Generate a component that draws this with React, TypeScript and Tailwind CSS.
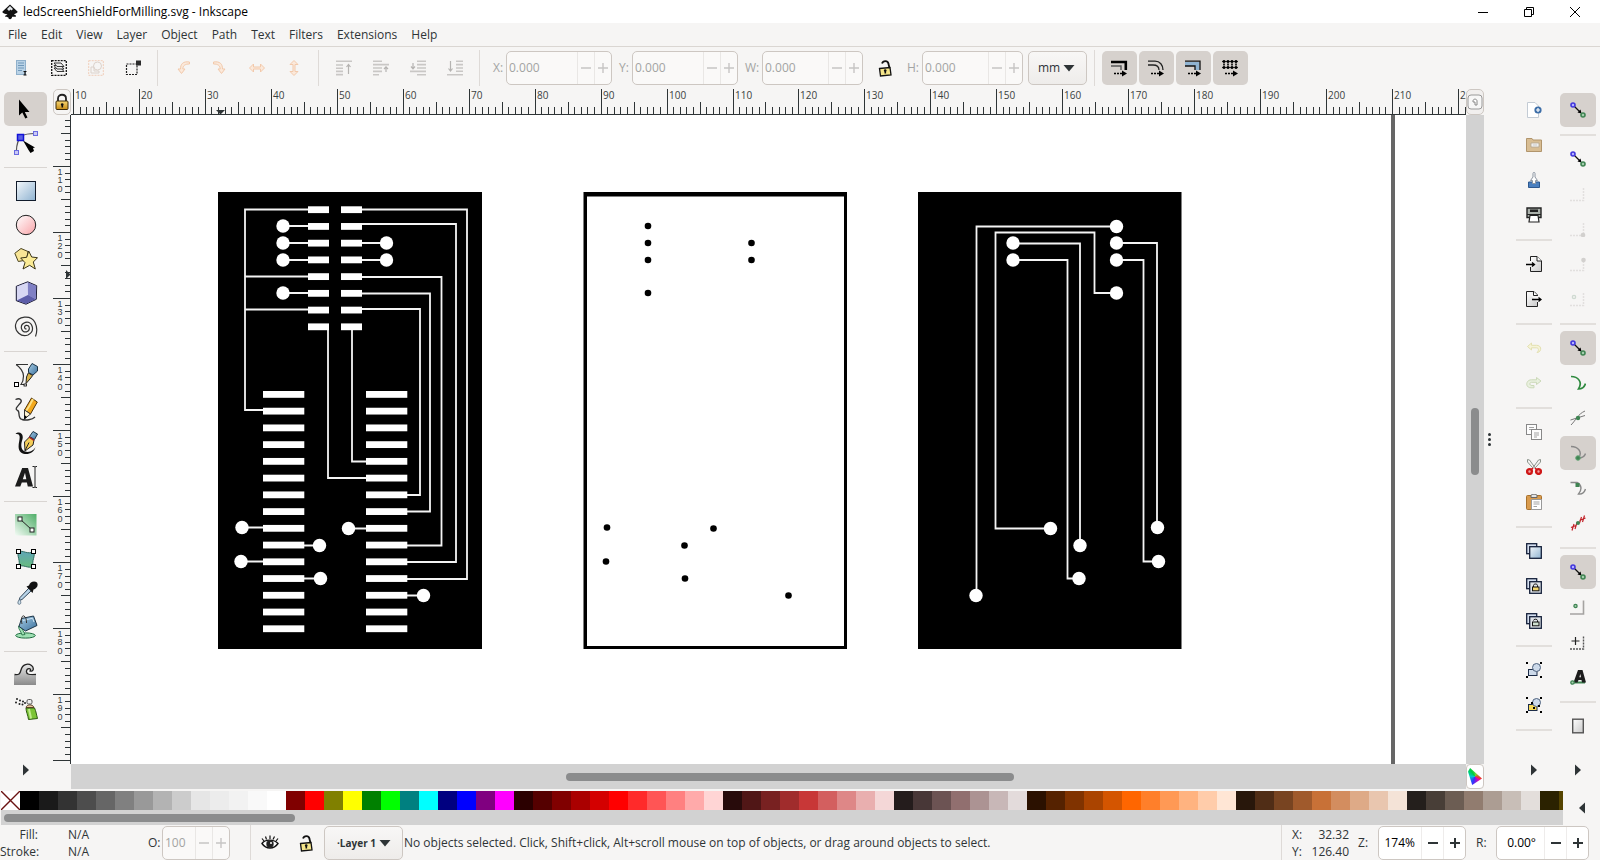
import React, { useState } from 'react';

type IconProps = { children: React.ReactNode; size?: number; className?: string };

const Svg = ({ children, size = 16, className = '' }: IconProps) => (
    <svg width={size} height={size} viewBox={`0 0 ${size} ${size}`} fill="none" className={`shrink-0 ${className}`} aria-hidden="true">
        {children}
    </svg>
);

/* ---------- shared glyphs ---------- */

const Padlock = ({ open = false }: { open?: boolean }) => (
    <Svg size={18}>
        {open ? (
            <>
                <path d="M6 4.5C7 1.5 12 1 12.5 5L13.5 9" stroke="#111" strokeWidth="1.8" />
                <path d="M3.5 9.5L14 8.5L15 16L4.5 17Z" fill="#f5e58a" stroke="#111" strokeWidth="1.3" />
            </>
        ) : (
            <>
                <path d="M5 8V5.5C5 0.5 13 0.5 13 5.5V8" stroke="#222" strokeWidth="1.8" />
                <rect x="3" y="8" width="12" height="8.5" rx="1" fill="url(#gold)" stroke="#3b2a08" />
            </>
        )}
        <path d="M9.3 11V14.5" stroke="#111" strokeWidth="1.6" />
        <circle cx="9.2" cy="11.5" r="1.3" fill="#111" />
    </Svg>
);

const Triangle = ({ dir = 'right' }: { dir?: 'right' | 'left' | 'down' }) => (
    <Svg size={12}>
        {dir === 'right' && <path d="M3 0.5L9 6L3 11.5Z" fill="#2e3436" />}
        {dir === 'left' && <path d="M9 0.5L3 6L9 11.5Z" fill="#2e3436" />}
        {dir === 'down' && <path d="M0.5 3L11.5 3L6 9.5Z" fill="#2e3436" />}
    </Svg>
);

const Gradients = () => (
    <svg width="0" height="0" className="absolute" aria-hidden="true">
        <defs>
            <linearGradient id="gold" x1="0" y1="0" x2="0" y2="1"><stop offset="0" stopColor="#f7d774" /><stop offset="1" stopColor="#c78c17" /></linearGradient>
            <linearGradient id="blue" x1="0" y1="0" x2="1" y2="1"><stop offset="0" stopColor="#f4f8fb" /><stop offset="1" stopColor="#8fb3d1" /></linearGradient>
            <linearGradient id="pink" x1="0" y1="0" x2="1" y2="1"><stop offset="0" stopColor="#fff" /><stop offset="1" stopColor="#f9a3a8" /></linearGradient>
            <linearGradient id="green" x1="0" y1="1" x2="1" y2="0"><stop offset="0" stopColor="#f4fbf5" /><stop offset="1" stopColor="#4fae68" /></linearGradient>
            <linearGradient id="teal" x1="0" y1="0" x2="0" y2="1"><stop offset="0" stopColor="#5fa5b8" /><stop offset="1" stopColor="#68bb7c" /></linearGradient>
            <linearGradient id="grey" x1="0" y1="0" x2="0" y2="1"><stop offset="0" stopColor="#e8e8e8" /><stop offset="1" stopColor="#8a8a8a" /></linearGradient>
            <linearGradient id="steel" x1="0" y1="0" x2="1" y2="1"><stop offset="0" stopColor="#a9cfe6" /><stop offset="1" stopColor="#3a6f9c" /></linearGradient>
            <linearGradient id="sheet" x1="0" y1="0" x2="1" y2="1"><stop offset="0" stopColor="#fff" /><stop offset="1" stopColor="#c9c9c9" /></linearGradient>
        </defs>
    </svg>
);

/* ---------- toolbox (24px) ---------- */

const tools: { name: string; icon: React.ReactNode }[][] = [
    [
        { name: 'Selector', icon: <path d="M5 2.5V18.5L8.3 15.5L11.3 21.5L13.5 20.5L10.8 15H15.5Z" fill="#000" /> },
        {
            name: 'Node', icon: <>
                <path d="M2.3 21C2.5 12 4 8 8 5C11 3 16 2.5 21 2.5" stroke="#555" strokeWidth="1.2" />
                <rect x="0.5" y="19.5" width="4" height="4" fill="#c9c9f5" stroke="#6a6ae0" />
                <rect x="19.5" y="0.5" width="4" height="4" fill="#c9c9f5" stroke="#6a6ae0" />
                <rect x="3.5" y="3.5" width="6" height="6" fill="#5a62e0" stroke="#1212d8" strokeWidth="1.5" />
                <path d="M9 9.5L21 16.5L19 17L20 20L16.5 22L14.5 19Z" fill="#000" />
            </>,
        },
    ],
    [
        { name: 'Rectangle', icon: <rect x="2.5" y="2.5" width="19" height="19" fill="url(#blue)" stroke="#111b2b" /> },
        { name: 'Ellipse', icon: <circle cx="12" cy="12" r="9.7" fill="url(#pink)" stroke="#222" /> },
        {
            name: 'Star', icon: <>
                <path d="M0.8 6.3L7 1.5L14 4.5L12.5 13L4.3 14.5Z" fill="#f8e596" stroke="#4a4320" />
                <path d="M14.7 4L17.7 10L23.5 10.7L19.3 15L21.3 22L15.7 18.3L9 22L11 15.7L6.7 11L12.7 10.3Z" fill="#fbeb95" stroke="#3a3418" />
            </>,
        },
        {
            name: '3D box', icon: <>
                <path d="M13.7 0.8L22.7 4.7L22.3 18.3L12 23.2L2.3 19.7V5.3Z" fill="#a5a5dd" stroke="#1c1c33" />
                <path d="M13.7 1.5L3 5.5V19.3L14 14Z" fill="#d7d7f3" />
                <path d="M14 1.5L22.2 5L21.8 18L14 14Z" fill="#8080c4" />
                <path d="M14 14L21.8 18.2L12 22.7L3 19.4Z" fill="#5d5da9" />
            </>,
        },
        { name: 'Spiral', icon: <path d="M12.5 13.8C10.5 14.6 9.6 11.2 12 10.4C15.5 9.4 17 15.5 12.5 16.8C7 18 4.8 9.6 11.5 7.4C18 5.6 22 16 14 20C7 22.8 0.5 16 1.6 9.5C3.5 0.5 17 -0.5 21 7.5C23.5 12.5 23 17.5 21.5 21.5" stroke="#333" strokeWidth="1.2" /> },
    ],
    [
        {
            name: 'Pen', icon: <>
                <path d="M2 1.5H14M2 1.5C6 4 9.5 9 9.5 13C9.5 17 8.5 19.5 7 21.5H11" stroke="#333" strokeWidth="1.2" />
                <rect x="0.5" y="19.5" width="4" height="4" fill="#fff" stroke="#000" />
                <rect x="10" y="21" width="2.5" height="2" fill="#fff" stroke="#000" strokeWidth="0.8" />
                <path d="M18 0.5L23.5 3.5V8L19 12L14.5 9.5V6Z" fill="url(#steel)" stroke="#1b3345" />
                <path d="M14.3 10L18.7 12.5L16 16L12 20.5L12.5 14Z" fill="#d9b44a" stroke="#222" />
            </>,
        },
        {
            name: 'Pencil', icon: <>
                <path d="M1.5 2.5C6 0.5 9 3 6 6.5C3 10 0.5 12 3.5 13.5C6.5 14 3 21 8 22.5C12 23.5 18 23 21 20" stroke="#333" strokeWidth="1.3" />
                <path d="M17.5 1L23.3 5L16.5 17L10.5 13Z" fill="#f3a81c" stroke="#50340a" />
                <path d="M19 2L15 9.5L12 14" stroke="#fbe28a" strokeWidth="1.8" />
                <path d="M10.5 13L16.5 17L10.5 22Z" fill="#fff2d0" stroke="#333" />
                <path d="M10.5 18L13 20L10.3 22.3Z" fill="#000" />
            </>,
        },
        {
            name: 'Calligraphy', icon: <>
                <path d="M1.5 3C4.5 0 10 2 8.5 8C7 13 6 18 11 20.5C16 22 20 19 21.5 16C20 22.5 12 25 7 21.5C2 17 6.5 9 5.5 5C5 3 3.5 3 1.5 3Z" fill="#111" />
                <path d="M19 0.5L23.5 3L20.5 8.5L15.5 5.5Z" fill="url(#steel)" stroke="#1b3345" />
                <path d="M20 9L15.5 6L10.5 11L11 20L19 14Z" fill="#f4cd58" stroke="#222" />
                <path d="M11.3 19L15 11.5" stroke="#222" />
                <path d="M15 6L20 9.5" stroke="#b02020" strokeWidth="1.5" />
            </>,
        },
        {
            name: 'Text', icon: <>
                <path fillRule="evenodd" d="M1 21.5L8.2 3H14L19 21.5H13.8L12.9 17.5H7.8L6.3 21.5ZM8.8 14.3H12.3L11 7.8Z" fill="#1c1c1c" />
                <path d="M18.5 1.5H20.5L21 2.5L21.5 1.5H23M21 2.5V21.5M18.5 22.5H20.5L21 21.5L21.5 22.5H23" stroke="#222" />
            </>,
        },
    ],
    [
        {
            name: 'Gradient', icon: <>
                <rect x="1" y="1" width="21.5" height="21.5" fill="url(#green)" />
                <path d="M6 6L18 17" stroke="#222" />
                <rect x="4" y="4" width="4" height="4" fill="#fff" stroke="#222" />
                <rect x="16" y="15" width="4" height="4" fill="#fff" stroke="#222" />
            </>,
        },
        {
            name: 'Mesh', icon: <>
                <path d="M4.5 4.5C9 3 14 8 19.5 4.5C22 9 17 14 19.5 19.5C14 22 9 17 4.5 19.5C7 14 2.5 9 4.5 4.5Z" fill="url(#teal)" stroke="#2f6b60" />
                {[[2.5, 2.5], [17.5, 2.5], [2.5, 17.5], [17.5, 17.5]].map(([x, y]) => (
                    <rect key={`${x}-${y}`} x={x} y={y} width="4" height="4" fill="#fff" stroke="#000" />
                ))}
            </>,
        },
        {
            name: 'Dropper', icon: <>
                <path d="M15 7L17.5 9.5L8 18.5L5 19.5L6 16.5Z" fill="#b9d4e8" stroke="#2f4356" />
                <path d="M12.5 5.5L15 4.5C16 1 20 -0.5 23 1.5C25 5 22 8 19.5 8.5L18.5 12Z" fill="#111" />
                <path d="M5.5 18.5C7.5 21 7 23.3 5.3 23.3C3.3 23.3 3.5 20.5 5.5 18.5Z" fill="#cfe2ee" stroke="#4d6377" strokeWidth="0.8" />
            </>,
        },
        {
            name: 'Bucket', icon: <>
                <ellipse cx="11.5" cy="20.5" rx="9.8" ry="2.6" fill="#9ee0b3" stroke="#1e6b3e" />
                <path d="M4.5 11C4.5 15 7 16 8 20L11 19.5C10 17 8 14 7.5 12Z" fill="#9ee0b3" stroke="#1e6b3e" strokeWidth="0.8" />
                <path d="M7.5 3.5L19.5 1L23 10.5L11.5 16L5 11.5Z" fill="url(#steel)" stroke="#1d3447" />
                <path d="M9 5.5L18.5 3.2L20 7" stroke="#cfe5f3" />
                <path d="M8 9C6.5 3 8.5 0 10 1C12 2 12.5 5 12.5 8" stroke="#333" />
            </>,
        },
    ],
    [
        {
            name: 'Tweak', icon: <>
                <path d="M0 12C5 12 6 11 7 7C8.5 1 14 0 17.5 2.5C20.5 5 19.5 9 16 8C18 5 13 4.5 12.5 8C12 11.5 14.5 12.5 22 12.5V22H0Z" fill="url(#grey)" />
                <path d="M0.5 11.5C5 12 6 11 7 7C8.5 1 14 0 17.5 2.5C20.5 5 19.5 9 16 8C18 5 13 4.5 12.5 8C12 11.5 15.5 12 22 11.5" stroke="#222" strokeWidth="1.3" />
            </>,
        },
        {
            name: 'Spray', icon: <>
                {[[3, 2], [2, 5.5], [6, 3.5], [5.5, 7], [9, 4.5], [8.5, 7.5], [11, 6]].map(([x, y]) => (
                    <circle key={`${x}-${y}`} cx={x} cy={y} r="1" fill="#222" />
                ))}
                <path d="M12 11H20.5C22 14 22.5 18 23.5 21.5L14.5 22.5C14 18 12 15 12 11Z" fill="#7cc436" stroke="#2d5b11" />
                <path d="M15 12C15.5 15 16.5 18 17 21.5" stroke="#c0ea8c" strokeWidth="2" />
                <path d="M12 10.5C12.5 7.5 18.5 6.5 20 10.5Z" fill="#e9c9a0" stroke="#5a4126" />
                <rect x="13" y="2.5" width="5" height="4.5" rx="1.5" fill="#eee" stroke="#555" />
            </>,
        },
    ],
];

/* ---------- commands bar ---------- */

const pageWithArrow = (inward: boolean) => (
    <>
        <path d={inward ? 'M4.5 5V0.5H11L15.5 5V15.5H4.5V11' : 'M0.5 0.5H8L11.5 4V5M0.5 0.5V15.5H11.5V11'} fill="url(#sheet)" stroke="#222" />
        <path d={inward ? 'M11 0.5V5H15.5' : 'M7.5 0.5V4.5H11.5'} fill="#fff" stroke="#222" />
        <path d={inward ? 'M0 8.5H8M6 6.5L8.5 8.5L6 10.5' : 'M6 8.5H14M12.5 6.5L15 8.5L12.5 10.5'} stroke="#000" strokeWidth="1.3" />
    </>
);

const duplicate = (lock?: 'closed' | 'open') => (
    <>
        <rect x="0.7" y="0.7" width="10" height="10" fill="#d4dff0" stroke="#14203a" strokeWidth="1.3" />
        <rect x="3.7" y="3.7" width="11.6" height="11.6" fill={lock ? '#dfe3e8' : 'url(#blue)'} stroke="#14203a" strokeWidth="1.3" />
        {lock && (
            <>
                <path d={lock === 'closed' ? 'M7.5 9V7.5C7.5 5.5 11.5 5.5 11.5 7.5V9' : 'M7.5 7.5C7.5 5.8 11.5 5.8 11.5 7.5V9.5'} stroke="#111" />
                <rect x="6.5" y="9" width="6.5" height="3.8" fill={lock === 'closed' ? '#f4d76f' : '#cfe0d0'} stroke="#111" />
            </>
        )}
    </>
);

const groupShapes = (fill: string) => (
    <>
        <rect x="2.5" y="7.5" width="8.5" height="6" fill={fill} stroke="#1c2c48" />
        <circle cx="10.5" cy="5.5" r="4" fill="#cddaea" stroke="#4d617d" />
        <path d="M0 0H2V2H0ZM14 0H16V2H14ZM0 14H2V16H0ZM14 14H16V16H14Z" fill="#000" />
    </>
);

const commands: { name: string; icon: React.ReactNode }[][] = [
    [
        {
            name: 'New', icon: <>
                <path d="M1.5 0.5H9L12.5 4V15.5H1.5Z" fill="#fff" stroke="#c3cbd4" />
                <circle cx="12" cy="8" r="3.6" fill="#3d6ea8" />
                <path d="M12 6V10M10 8H14" stroke="#fff" strokeWidth="1.2" />
            </>,
        },
        {
            name: 'Open', icon: <>
                <path d="M0.5 1.5H6L7 3H15.5V14.5H0.5Z" fill="#d8bd93" stroke="#b1956c" />
                <path d="M5 6H13V10H5Z" fill="#fff" stroke="#b7aa95" />
                <path d="M6.5 8H11.5" stroke="#bbb" />
            </>,
        },
        {
            name: 'Save', icon: <>
                <path d="M2.5 10H13.5V15.5H2.5Z" fill="#4a7fbf" stroke="#2d588f" />
                <path d="M6.5 11.5V8.5H4.5L7 5V1.5C7 0 9 0 9 1.5V5L11.5 8.5H9.5V11.5Z" fill="#fff" stroke="#8b94a0" />
            </>,
        },
        {
            name: 'Print', icon: <>
                <path d="M1 1H15V10.5H1Z" fill="#a9b0aa" stroke="#222" strokeWidth="1.4" />
                <path d="M4 2.5H12V5H4Z" fill="#222" />
                <path d="M1 7.5H15" stroke="#222" />
                <path d="M4 8.5H12L13 15H3Z" fill="#fff" stroke="#222" strokeWidth="1.2" />
            </>,
        },
    ],
    [
        { name: 'Import', icon: pageWithArrow(true) },
        { name: 'Export', icon: pageWithArrow(false) },
    ],
    [
        { name: 'Undo', icon: <path d="M5.5 3L1.5 6.5L5.5 10V7.8H10.5C13 7.8 13 11 11 12.5C15.5 12.5 16.5 5.3 10.5 5.3H5.5Z" fill="#f6f4d8" stroke="#e3e0b0" /> },
        { name: 'Redo', icon: <path d="M10.5 2.5L15 6L10.5 9.5V7.3H5.5C3.5 7.3 3 10.5 6 10.5H8V12.8H5C-1 12.8 -0.5 4.8 5.5 4.8H10.5Z" fill="#e9f0df" stroke="#cbd9b8" /> },
    ],
    [
        {
            name: 'Copy', icon: <>
                <rect x="0.5" y="0.5" width="10" height="10" fill="#fdfdfd" stroke="#888" />
                <rect x="5.5" y="5.5" width="10" height="10" fill="#fdfdfd" stroke="#888" />
                <path d="M3 3.5H8M3 5.5H5M8 9H13M8 11H13M8 13H11" stroke="#999" strokeWidth="0.9" />
            </>,
        },
        {
            name: 'Cut', icon: <>
                <path d="M1.5 0.5L3.5 1L10 10M14.5 0.5L12.5 1L6 10M1.5 0.5V3L6.5 8.5M14.5 0.5V3L9.5 8.5" stroke="#8b938b" />
                <circle cx="3.5" cy="12.5" r="2.4" fill="#f3a0a0" stroke="#cf1717" strokeWidth="2.4" />
                <circle cx="12.5" cy="12.5" r="2.4" fill="#f3a0a0" stroke="#cf1717" strokeWidth="2.4" />
                <path d="M5.5 10.5L7 9M10.5 10.5L9 9" stroke="#cf1717" strokeWidth="1.6" />
            </>,
        },
        {
            name: 'Paste', icon: <>
                <rect x="0.5" y="1.5" width="15" height="14" rx="1" fill="#d99b4d" stroke="#a8712c" />
                <path d="M5 1.5C5 -0.3 11 -0.3 11 1.5V3.5H5Z" fill="#e4e4e4" stroke="#666" />
                <path d="M5.5 5.5H15.5V15.5H5.5Z" fill="#fff" stroke="#999" />
                <path d="M7.5 8H13.5M7.5 10H13.5M7.5 12.5H11" stroke="#999" strokeWidth="0.9" />
            </>,
        },
    ],
    [
        { name: 'Duplicate', icon: duplicate() },
        { name: 'Clone', icon: duplicate('closed') },
        { name: 'Unlink clone', icon: duplicate('open') },
    ],
    [
        { name: 'Group', icon: groupShapes('#cddaea') },
        { name: 'Ungroup', icon: <>{groupShapes('#f7da57')}<path d="M5 5H7V7H5ZM12 8H14V10H12ZM7 10H9V12H7Z" fill="#000" /></> },
    ],
];

/* ---------- snap bar ---------- */

const snapDots = (
    <>
        <path d="M4.5 4.5L10 10" stroke="#111" strokeWidth="1.2" />
        <path d="M11.5 11.5L7.5 10.5L10.5 7.5Z" fill="#000" />
        <circle cx="3" cy="3" r="2" fill="#b4b4ff" stroke="#4338dd" strokeWidth="1.6" />
        <circle cx="13" cy="13" r="2" fill="#a5cdae" stroke="#3f8452" strokeWidth="1.6" />
    </>
);

const corner = (extra?: React.ReactNode) => (
    <>
        <path d="M0 14.5H13.5V1" stroke="#e2e0de" strokeWidth="1.5" strokeDasharray="2 1" />
        {extra}
    </>
);

const snaps: { name: string; icon: React.ReactNode; on?: boolean }[][] = [
    [{ name: 'Enable snapping', icon: snapDots, on: true }],
    [
        { name: 'Snap bounding boxes', icon: snapDots },
        { name: 'Snap to bbox edges', icon: corner() },
        { name: 'Snap to bbox corners', icon: corner(<circle cx="13" cy="14" r="2.3" fill="#d2d0ce" />) },
        { name: 'Snap edge midpoints', icon: corner(<circle cx="13.5" cy="4" r="2.3" fill="#d2d0ce" />) },
        { name: 'Snap bbox centers', icon: corner(<circle cx="4" cy="6" r="1.6" stroke="#cfdad1" strokeWidth="1.4" />) },
    ],
    [
        { name: 'Snap nodes', icon: snapDots, on: true },
        { name: 'Snap to paths', icon: <path d="M1 1.5C8 1.5 13 7 8.5 14C12 14 14.5 12 15.5 8.5" stroke="#2f8a3f" strokeWidth="1.7" /> },
        { name: 'Snap to intersections', icon: <><path d="M1 15C6 10 8 4 15 1M0.5 10L15 5.5" stroke="#777" /><circle cx="8" cy="8" r="2.2" fill="#3f8452" /></> },
        { name: 'Snap to cusp nodes', icon: <><path d="M1 1.5C8 1.5 13 7 8.5 13C12 13 14.5 12 15.5 8.5" stroke="#888" strokeWidth="1.4" /><circle cx="8" cy="13" r="2.3" fill="#3f8452" stroke="#68a577" /></>, on: true },
        { name: 'Snap to smooth nodes', icon: <><path d="M0.5 2.5H7C12 5 12 10 8.5 14C12 14.5 14.5 12 15.5 9" stroke="#888" strokeWidth="1.4" /><rect x="5.5" y="3" width="4" height="4" fill="#3f8452" /></> },
        { name: 'Snap to midpoints', icon: <><path d="M2 15.5L4 9M5 14L7 7.5M1 12.5L6 10.5M9.5 8L11.5 2M12.5 7L14.5 0.5M9.5 5.5L15.5 3" stroke="#c22127" strokeWidth="1.2" /><circle cx="8" cy="8" r="2" fill="#3f8452" /></> },
    ],
    [
        { name: 'Snap other points', icon: snapDots, on: true },
        { name: 'Snap object midpoints', icon: <><path d="M0 15H13.5V1.5" stroke="#a5a3a1" strokeWidth="1.6" /><circle cx="5.5" cy="7" r="1.6" fill="#a5cdae" stroke="#3f8452" strokeWidth="1.3" /></> },
        { name: 'Snap rotation centers', icon: <><path d="M0 15H13.5V1.5" stroke="#555" strokeWidth="1.4" strokeDasharray="2 1" /><path d="M5.5 3V11M1.5 7H9.5" stroke="#222" strokeWidth="1.2" /></> },
        { name: 'Snap text baselines', icon: <><path d="M2 13.5H15" stroke="#3f8452" strokeWidth="2" /><path fillRule="evenodd" d="M3.5 13.5L8 1H12.5L16 13.5H12L11.5 11H8.5L7.5 13.5ZM9.3 8.3H11L10.3 5Z" fill="#1c1c1c" /><circle cx="2.5" cy="13.5" r="1.7" fill="#a5cdae" stroke="#3f8452" strokeWidth="1.3" /></> },
    ],
    [
        { name: 'Snap to page border', icon: <rect x="2.7" y="1.2" width="10.6" height="13.6" fill="url(#sheet)" stroke="#555" strokeWidth="1.4" /> },
    ],
];

/* ---------- tool controls ---------- */

const Bars = ({ lines, arrow }: { lines: string; arrow: string }) => (
    <>
        <path d={lines} stroke="#c9c7c5" strokeWidth="1.6" />
        <path d={arrow} stroke="#b5b3b1" strokeWidth="1.2" />
    </>
);

const controls: { name: string; icon: React.ReactNode }[][] = [
    [
        {
            name: 'Select all', icon: <>
                <rect x="2.5" y="0.5" width="9" height="14" fill="#b9d2e6" stroke="#8fb0cb" />
                <path d="M4 3H10M4 5.5H10M4 8H10M4 10.5H8" stroke="#6f98ba" />
                <path d="M9.5 11.5H12.5M11 11.5V15M9.5 15H12.5" stroke="#111" strokeWidth="1.2" />
            </>,
        },
        {
            name: 'Select in all layers', icon: <>
                <rect x="0.7" y="0.7" width="14.6" height="14.6" stroke="#111" strokeWidth="1.3" strokeDasharray="2 1" />
                {[9, 6.5, 4].map(y => <path key={y} d={`M3 ${y - 1}H10L13 ${y + 2.5}H6Z`} fill="#eee" stroke="#222" strokeWidth="0.9" />)}
            </>,
        },
        {
            name: 'Deselect', icon: <>
                <rect x="0.7" y="0.7" width="14.6" height="14.6" stroke="#f0cdb9" strokeDasharray="2 1" />
                <circle cx="9.5" cy="6" r="4" stroke="#dcd2cb" />
                <path d="M3 7H6V11H11V13H3Z" stroke="#dcd2cb" />
            </>,
        },
        {
            name: 'Rubber band touch', icon: <>
                <rect x="1.5" y="4" width="10.5" height="10.5" stroke="#222" strokeWidth="1.2" strokeDasharray="2 1" />
                <rect x="11" y="0.5" width="5" height="5" fill="#2b2b2b" />
            </>,
        },
    ],
    [
        { name: 'Rotate 90 left', icon: <path d="M14.5 2C8 1 5.5 4 5.5 9H3L6.5 13.5L10 9H7.8C8 5.5 10 4 14.5 4Z" fill="#fbe9db" stroke="#f2c9ab" /> },
        { name: 'Rotate 90 right', icon: <path d="M1.5 2C8 1 10.5 4 10.5 9H13L9.5 13.5L6 9H8.2C8 5.5 6 4 1.5 4Z" fill="#fbe9db" stroke="#f2c9ab" /> },
        { name: 'Flip horizontal', icon: <path d="M0.5 8L4.5 4V7H11.5V4L15.5 8L11.5 12V9H4.5V12Z" fill="#fbe9db" stroke="#f2c9ab" /> },
        { name: 'Flip vertical', icon: <path d="M8 0.5L12 4.5H9V11.5H12L8 15.5L4 11.5H7V4.5H4Z" fill="#fbe9db" stroke="#f2c9ab" /> },
    ],
    [
        { name: 'Raise to top', icon: <Bars lines="M0 1.2H16M0 5H7M0 8.2H7M0 11.4H7M0 14.6H7" arrow="M12.5 14V4.5M10.5 7L12.5 4.5L14.5 7" /> },
        { name: 'Raise', icon: <Bars lines="M0 1.2H9M0 4.6H16M0 8H9M0 11.4H9M0 14.8H6" arrow="M13 12V7M11 9L13 6.8L15 9" /> },
        { name: 'Lower', icon: <Bars lines="M7 1.2H16M7 4.6H16M7 8H16M0 11.4H16M7 14.8H16" arrow="M3 3V8.5M1 6.5L3 8.8L5 6.5" /> },
        { name: 'Lower to bottom', icon: <Bars lines="M9 1.2H16M9 4.6H16M9 8H16M9 11.2H16M0 14.8H16" arrow="M3.5 1V11M1.5 8.5L3.5 11L5.5 8.5" /> },
    ],
];

const affects: { name: string; icon: React.ReactNode }[] = [
    { name: 'Scale stroke width', icon: <><path d="M0 2H14.8V10" stroke="#000" strokeWidth="2.6" /><path d="M0 6H10V10" stroke="#555" strokeWidth="1.4" /></> },
    { name: 'Scale rounded corners', icon: <><path d="M0 1.2H7C12 1.2 15 5 15 10" stroke="#222" strokeWidth="1.3" /><path d="M0 5H5C9 5 11 7 11 10" stroke="#222" strokeWidth="1.3" /></> },
    { name: 'Move gradients', icon: <><path d="M0 2H14.5V10H10V6H0Z" fill="#8fb3d1" /><path d="M0 1.2H15V10M0 6H10V10" stroke="#111" strokeWidth="1.3" /></> },
    {
        name: 'Move patterns', icon: <>
            <path d="M0 1.5H16M0 7.5H16" stroke="#111" strokeWidth="0.8" />
            {[2, 6, 10, 14].map(x => <path key={x} d={`M${x - 1.5} 1.5H${x + 1.5}M${x} 0V3M${x - 1.5} 7.5H${x + 1.5}M${x} 6V9M${x} 3.5V5.5`} stroke="#000" strokeWidth="1.6" />)}
        </>,
    },
];

const AffectArrow = () => <><path d="M3 13.5H11" stroke="#000" strokeWidth="1.4" strokeDasharray="2 1" /><path d="M11 10.5L16 13.5L11 16.5Z" fill="#000" /></>;

/* ---------- small building blocks ---------- */

interface SpinProps {
    label: string;
    value: string;
    className: string;
    labelClass: string;
    buttonClass?: string;
    inputClass?: string;
    disabled?: boolean;
}

const Spin = ({ label, value, className, labelClass, buttonClass = 'w-[17px]', inputClass = 'pl-[2px]', disabled }: SpinProps) => {
    const tone = disabled ? 'text-[#a3a4a3]' : 'text-[#2e3436]';
    const divider = disabled ? 'border-[#e9e7e5]' : 'border-[#eeeceb]';
    return (
        <div className={`flex items-center ${tone}`}>
            <label htmlFor={`spin-${label}`} className={`shrink-0 ${labelClass}`}>{label}:</label>
            <div className={`flex h-[34px] shrink-0 overflow-hidden rounded-[5px] border border-[#cdc7c2] ${disabled ? 'bg-[#faf9f8]' : 'bg-white'} ${className}`}>
                <input id={`spin-${label}`} defaultValue={value} disabled={disabled} className={`min-w-0 flex-1 bg-transparent outline-none ${inputClass}`} />
                {['M1 6H11', 'M1 6H11M6 1V11'].map((d, i) => (
                    <button key={d} type="button" disabled={disabled} aria-label={`${i ? 'Increase' : 'Decrease'} ${label}`} className={`flex shrink-0 items-center justify-center border-l ${divider} ${buttonClass}`}>
                        <Svg size={12}><path d={d} stroke={disabled ? '#c6c5c4' : '#2e3436'} strokeWidth={disabled ? 1.4 : 2} /></Svg>
                    </button>
                ))}
            </div>
        </div>
    );
};

const Drop = ({ label, options, className }: { label: string; options: string[]; className: string }) => (
    <div className="relative shrink-0">
        <select aria-label={label} className={`h-[34px] appearance-none rounded-[5px] border border-[#cdc7c2] bg-linear-to-b from-[#f8f7f6] to-[#eeecea] outline-none ${className}`}>
            {options.map(o => <option key={o}>{o}</option>)}
        </select>
        <span className="pointer-events-none absolute inset-y-0 right-3 flex items-center"><Triangle dir="down" /></span>
    </div>
);

const VSep = ({ className = '' }: { className?: string }) => <div className={`w-px shrink-0 self-stretch bg-[#dedad7] ${className}`} />;

/* ---------- rulers ---------- */

const MM = 6.595;
const digitBaselines = [9, 17, 26];

const TopRuler = () => (
    <svg className="h-[26px] w-full min-w-0" aria-hidden="true">
        {Array.from({ length: 300 }, (_, i) => {
            const x = Math.round(2 + i * MM) + 0.5;
            const top = i % 10 === 0 ? 0 : i % 5 === 0 ? 13 : 18;
            return <path key={i} d={`M${x} ${top}V25`} stroke="#2e3436" />;
        })}
        {Array.from({ length: 22 }, (_, i) => (
            <text key={i} x={Math.round(2 + i * 10 * MM) + 2} y="10" fill="#3a3f41" className="text-[10px]">{10 + i * 10}</text>
        ))}
        <path d="M145 21H154L149.5 25.5Z" fill="#2e3436" />
        <path d="M0 25.5H4000" stroke="#2e3436" />
    </svg>
);

const SideRuler = () => (
    <svg className="h-full w-[18px]" aria-hidden="true">
        {Array.from({ length: 200 }, (_, i) => {
            const mm = i - 7;
            const y = Math.round(51 + mm * 6.605) + 0.5;
            const left = mm % 10 === 0 ? 0 : mm % 5 === 0 ? 8 : 12;
            return <path key={i} d={`M${left} ${y}H18`} stroke="#2e3436" />;
        })}
        {Array.from({ length: 9 }, (_, i) => String(110 + i * 10).split('').map((digit, n) => (
            <text key={`${i}-${n}`} x="7" y={Math.round(51 + i * 66.05) + digitBaselines[n]} textAnchor="middle" fill="#3a3f41" className="font-['Liberation_Sans',sans-serif] text-[9px]">{digit}</text>
        )))}
        <path d="M13 155V164L17.5 159.5Z" fill="#2e3436" />
        <path d="M17.5 0V4000" stroke="#2e3436" />
    </svg>
);

/* ---------- drawing ---------- */

const leftTraces = [
    'M308 209.5H245V410H263', 'M245 276.5H308', 'M245 309.5H308',
    'M362 209.5H467V579H407', 'M362 224H456V562H407', 'M362 277H441.5V545.5H407',
    'M362 293.5H430V511.5H407', 'M362 309H420V495H407',
    'M328 326V478H366', 'M352 326V461.5H366',
    'M283 226H308', 'M283 243H308', 'M283 260H308', 'M283 293H308', 'M362 243H386', 'M362 260H386',
    'M242 527.5H263', 'M241 561.5H263', 'M304 545.5H319', 'M304 578.5H320', 'M349 528.5H366', 'M407 595.5H423',
];
const leftVias = [[283, 226], [283, 243], [283, 260], [283, 293], [386.5, 243], [386.5, 260], [242, 527.5], [348.5, 528.5], [319.5, 545.5], [241, 561.5], [320.5, 578.5], [423.5, 595.5]];
const holes = [[648, 226], [648, 243], [648, 260], [648, 293], [751.5, 243], [751.5, 260], [607, 527.5], [713.5, 528.5], [684.5, 545.5], [606, 561.5], [685, 578.5], [788.5, 595.5]];
const rightTraces = ['M1116 226.5H976.5V596', 'M1050 528.5H995.5V232.5H1094.5V293H1116', 'M1013 243.5H1080V545', 'M1013 260H1067.5V578.5H1079', 'M1116 243H1157V527', 'M1116 260H1143.5V561.5H1158'];
const rightVias = [[1116.5, 226.5], [1116.5, 243], [1116.5, 260], [1116.5, 293], [1013, 243], [1013, 260], [1050.5, 528.5], [1080, 545.5], [1079, 578.5], [976, 595.5], [1157.5, 527.5], [1158.5, 561.5]];

const Drawing = () => (
    <svg className="h-full w-full min-w-0 bg-white" role="img" aria-label="LED screen shield layout">
        <g transform="translate(-71 -115)">
            <path d="M1393 0V3000" stroke="#666" strokeWidth="4" />

            <rect x="218" y="192" width="264" height="457" fill="#000" />
            <path d={leftTraces.join('')} stroke="#f4f4f4" strokeWidth="1.8" fill="none" />
            {Array.from({ length: 8 }, (_, i) => [308, 341].map(x => (
                <rect key={`${i}-${x}`} x={x} y={206.3 + i * 16.73} width="21" height="6.8" fill="#fff" />
            )))}
            {Array.from({ length: 15 }, (_, i) => [263, 366].map(x => (
                <rect key={`${i}-${x}`} x={x} y={391 + i * 16.74} width="41.3" height="6.8" fill="#fff" />
            )))}
            {leftVias.map(([x, y]) => <circle key={`${x}-${y}`} cx={x} cy={y} r="6.7" fill="#fff" />)}

            <path fillRule="evenodd" d="M583.5 192H847V649H583.5ZM587 196.5V646H844V196.5Z" fill="#000" />
            {holes.map(([x, y]) => <circle key={`${x}-${y}`} cx={x} cy={y} r="3.3" fill="#000" />)}

            <rect x="918" y="192" width="263.5" height="457" fill="#000" />
            <path d={rightTraces.join('')} stroke="#f4f4f4" strokeWidth="1.8" fill="none" />
            {rightVias.map(([x, y]) => <circle key={`${x}-${y}`} cx={x} cy={y} r="6.7" fill="#fff" />)}
        </g>
    </svg>
);

/* ---------- palette ---------- */

const palette = (
    '000000 1a1a1a 333333 4d4d4d 666666 808080 999999 b3b3b3 cccccc e6e6e6 ececec f2f2f2 f9f9f9 ffffff ' +
    '800000 ff0000 808000 ffff00 008000 00ff00 008080 00ffff 000080 0000ff 800080 ff00ff ' +
    '2b0000 550000 800000 aa0000 d40000 ff0000 ff2a2a ff5555 ff8080 ffaaaa ffd5d5 ' +
    '280b0b 501616 782121 a02c2c c83737 d35f5f de8787 e9afaf f4d7d7 ' +
    '241c1c 483737 6c5353 916f6f ac9393 c8b7b7 e3dbdb ' +
    '2b1100 552200 803300 aa4400 d45500 ff6600 ff7f2a ff9955 ffb380 ffccaa ffe6d5 ' +
    '28170b 502d16 784421 a05a2c c87137 d38d5f deaa87 e9c6af f4e3d7 ' +
    '241f1c 483e37 6c5d53 917c6f ac9d93 c8beb7 e3dedb ' +
    '2b2200 554400 806600 aa8800 d4aa00 ffcc00'
).split(' ');

const menus = ['File', 'Edit', 'View', 'Layer', 'Object', 'Path', 'Text', 'Filters', 'Extensions', 'Help'];

const App: React.FC = () => {
    const [tool, setTool] = useState('Selector');

    return (
        <div className="flex h-screen flex-col overflow-hidden bg-[#f6f5f4] font-['Open_Sans','Noto_Sans',sans-serif] text-[12px] leading-4 text-[#2e3436]">
            <Gradients />

            <header className="flex h-[23px] shrink-0 items-center bg-white pr-[2px] pl-[2px] text-black">
                <Svg size={16}>
                    <path d="M8 0.5L15.5 7.5C16 9 13 9.5 12 10.5C13 11.5 14.5 11 14 12.5C12 13.5 11 12 10 13C10 15 8 16 6.5 14.5C7 13 5 13 3 12.5C3 11 5 11.5 5.5 10.5C3.5 9.5 0 9.5 0.5 7.5Z" fill="#111" />
                    <path d="M8 2L11 5L9.5 6.5L8.5 5.5L7 7L5 5Z" fill="#e4e8ec" />
                </Svg>
                <h1 className="ml-[5px] flex-1 truncate">ledScreenShieldForMilling.svg - Inkscape</h1>
                <button type="button" aria-label="Minimize" className="flex h-full w-[46px] items-center justify-center"><Svg size={12}><path d="M1 6.5H11" stroke="#000" /></Svg></button>
                <button type="button" aria-label="Restore" className="flex h-full w-[46px] items-center justify-center"><Svg size={12}><path d="M3.5 3V1.5H10.5V8.5H9M1.5 3.5H8.5V10.5H1.5Z" stroke="#000" /></Svg></button>
                <button type="button" aria-label="Close" className="flex h-full w-[46px] items-center justify-center"><Svg size={12}><path d="M1 1L11 11M11 1L1 11" stroke="#000" /></Svg></button>
            </header>

            <nav className="flex h-6 shrink-0 items-center border-b border-[#dad6d2] pl-px">
                {menus.map(m => <button key={m} type="button" className="px-[7px]">{m}</button>)}
            </nav>

            <div className="flex h-[42px] shrink-0 items-center py-[3px] pl-[3px]">
                {controls.map((group, g) => (
                    <React.Fragment key={g}>
                        {group.map(c => (
                            <button key={c.name} type="button" aria-label={c.name} className="flex h-[34px] w-[37px] shrink-0 items-center justify-center"><Svg>{c.icon}</Svg></button>
                        ))}
                        <VSep className="mx-[6px]" />
                    </React.Fragment>
                ))}
                <div className="ml-[7px] flex items-center gap-[7px]">
                    <Spin label="X" value="0.000" labelClass="w-[13px]" className="w-[106px]" disabled />
                    <Spin label="Y" value="0.000" labelClass="w-[13px]" className="w-[106px]" disabled />
                    <Spin label="W" value="0.000" labelClass="w-[17px]" className="w-[101px]" disabled />
                </div>
                <button type="button" aria-label="Lock ratio" className="flex w-[44px] shrink-0 justify-center"><Padlock open /></button>
                <Spin label="H" value="0.000" labelClass="w-[15px]" className="w-[101px]" disabled />
                <div className="ml-[5px] flex"><Drop label="Units" options={['mm', 'px', 'in']} className="w-[59px] pl-[9px]" /></div>
                <VSep className="mx-[7px]" />
                <div className="flex gap-[2px]">
                    {affects.map(a => (
                        <button key={a.name} type="button" aria-label={a.name} aria-pressed="true" className="flex h-[34px] w-[35px] items-center justify-center rounded-[5px] bg-[#d6d1cd]">
                            <Svg size={17}>{a.icon}<AffectArrow /></Svg>
                        </button>
                    ))}
                </div>
            </div>

            <main className="flex min-h-0 flex-1">
                <aside className="flex w-[53px] shrink-0 flex-col px-1 pt-[3px]">
                    {tools.map((group, g) => (
                        <React.Fragment key={g}>
                            {g > 0 && <div className="mt-[7px] mb-[6px] h-px w-[43px] bg-[#d9d5d2]" />}
                            {group.map(t => (
                                <button key={t.name} type="button" aria-label={t.name} onClick={() => setTool(t.name)} className={`flex h-[34px] w-[43px] shrink-0 items-center justify-center rounded-[5px] ${tool === t.name ? 'bg-[#d6d1cd]' : ''}`}>
                                    <Svg size={24}>{t.icon}</Svg>
                                </button>
                            ))}
                        </React.Fragment>
                    ))}
                    <button type="button" aria-label="More tools" className="mt-auto mb-[13px] flex w-[43px] justify-center"><Triangle /></button>
                </aside>

                <section className="grid min-w-0 flex-1 grid-cols-[18px_minmax(0,1fr)_18px] grid-rows-[26px_minmax(0,1fr)_25px]">
                    <button type="button" aria-label="Lock guides" className="flex items-center justify-center rounded-[5px] border border-[#cdc7c2]"><Padlock /></button>
                    <TopRuler />
                    <button type="button" aria-label="Zoom if window resized" className="flex items-center justify-center rounded-[5px] border border-[#cdc7c2] bg-[#f1efee]">
                        <Svg size={16}><rect x="1" y="1" width="14" height="14" rx="3" fill="#f7f7f7" stroke="#999" /><path d="M6 7C6 4.5 10 4.5 10 7V11H8V8H6Z" fill="#fff" stroke="#888" /></Svg>
                    </button>
                    <SideRuler />
                    <Drawing />
                    <div className="flex flex-col items-center bg-[#d2d2d2]">
                        <div className="grow-[293]" />
                        <div className="w-2 grow-[67] rounded-full bg-[#8b8c8d]" />
                        <div className="grow-[289]" />
                    </div>
                    <div />
                    <div className="flex items-center bg-[#d2d2d2]">
                        <div className="grow-[495]" />
                        <div className="h-2 grow-[448] rounded-full bg-[#8b8c8d]" />
                        <div className="grow-[452]" />
                    </div>
                    <button type="button" aria-label="Color management" className="flex items-center justify-center rounded-[4px] border border-[#cdc7c2] bg-white">
                        <span className="h-[17px] w-[14px] bg-[conic-gradient(from_20deg,#7d3,#e33_25%,#e0a_30%,#33f_50%,#0cc_70%,#0c4_85%,#7d3)] [clip-path:polygon(15%_0,100%_62%,30%_100%,0_20%)]" />
                    </button>
                </section>

                <div className="flex w-7 shrink-0 flex-col justify-center gap-[2px] pl-1">
                    {[0, 1, 2].map(i => <span key={i} className="size-[3px] rounded-full bg-[#2e3436]" />)}
                </div>

                {[commands, snaps].map((bar, b) => (
                    <aside key={b} className="flex w-11 shrink-0 flex-col items-center pt-1">
                        {bar.map((group, g) => (
                            <React.Fragment key={g}>
                                {g > 0 && <div className="my-[6px] h-[2px] w-9 bg-[#e2dfdc]" />}
                                {group.map(c => (
                                    <div key={c.name} className="flex h-[35px] w-9 items-start">
                                        <button type="button" aria-label={c.name} className={`flex h-[34px] w-full items-center justify-center rounded-[5px] ${'on' in c && c.on ? 'bg-[#d6d1cd]' : ''}`}>
                                            <Svg>{c.icon}</Svg>
                                        </button>
                                    </div>
                                ))}
                            </React.Fragment>
                        ))}
                        {b === 0 && <div className="my-[6px] h-[2px] w-9 bg-[#e2dfdc]" />}
                        <button type="button" aria-label="More" className="mt-auto mb-[13px]"><Triangle /></button>
                    </aside>
                ))}
            </main>

            <div className="flex shrink-0 pt-[2px]">
                <div className="ml-px min-w-0 flex-1 bg-[#d2d2d2]">
                    <div className="flex h-[19px] overflow-hidden">
                        <button type="button" aria-label="No color" className="h-[19px] w-[19px] shrink-0 bg-white">
                            <Svg size={19}><path d="M0 0L19 19M19 0L0 19" stroke="#6b1212" strokeWidth="1.4" /></Svg>
                        </button>
                        {palette.map((c, i) => <button key={i} type="button" aria-label={`#${c}`} className="h-[19px] w-[19px] shrink-0" style={{ backgroundColor: `#${c}` }} />)}
                    </div>
                    <div className="flex h-[15px] items-center pl-[3px]">
                        <div className="h-2 w-[291px] rounded-full bg-[#8b8c8d]" />
                    </div>
                </div>
                <button type="button" aria-label="Palette menu" className="flex w-[37px] items-center justify-center"><Triangle dir="left" /></button>
            </div>

            <footer className="flex h-[35px] shrink-0 items-center">
                <dl className="grid w-[148px] shrink-0 grid-cols-[38px_1fr] gap-x-[30px] leading-[17px]">
                    <dt className="text-right">Fill:</dt><dd>N/A</dd>
                    <dt className="text-right">Stroke:</dt><dd>N/A</dd>
                </dl>
                <Spin label="O" value="100" labelClass="w-[14px] text-[#2e3436]" className="w-[68px]" disabled />
                <VSep className="ml-5" />
                <button type="button" aria-label="Toggle layer visibility" className="flex w-[37px] shrink-0 justify-center">
                    <Svg size={18}>
                        <path d="M1 9.5C4 5 13 5 17 9.5C13 15.5 5 15.5 1 9.5Z" fill="#fff" stroke="#111" strokeWidth="1.4" />
                        <circle cx="9" cy="10" r="3.7" fill="#222" />
                        <circle cx="10" cy="9" r="1" fill="#fff" />
                        <path d="M3 7L1 4.5M5.5 5.5L4.5 2.5M9 5V1.5M12 5.5L13.5 2.5M15 7L17 4.5" stroke="#111" strokeWidth="1.2" />
                    </Svg>
                </button>
                <button type="button" aria-label="Toggle layer lock" className="flex w-[36px] shrink-0 justify-center"><Padlock open /></button>
                <Drop label="Layer" options={['·Layer 1']} className="w-[79px] pl-3 text-[10px] font-bold" />
                <p className="ml-px min-w-0 flex-1 truncate">No objects selected. Click, Shift+click, Alt+scroll mouse on top of objects, or drag around objects to select.</p>
                <VSep />
                <dl className="ml-[10px] grid w-[57px] shrink-0 grid-cols-[12px_1fr] leading-[17px]">
                    <dt>X:</dt><dd className="text-right">32.32</dd>
                    <dt>Y:</dt><dd className="text-right">126.40</dd>
                </dl>
                <div className="mr-[11px] ml-[9px] flex gap-[10px]">
                    <Spin label="Z" value="174%" labelClass="w-5" className="w-[88px]" buttonClass="w-[22px]" inputClass="text-right pr-[6px] text-black" />
                    <Spin label="R" value="0.00°" labelClass="w-5" className="w-[93px]" buttonClass="w-[22px]" inputClass="text-right pr-[8px] text-black" />
                </div>
            </footer>
        </div>
    );
};

export default App;
